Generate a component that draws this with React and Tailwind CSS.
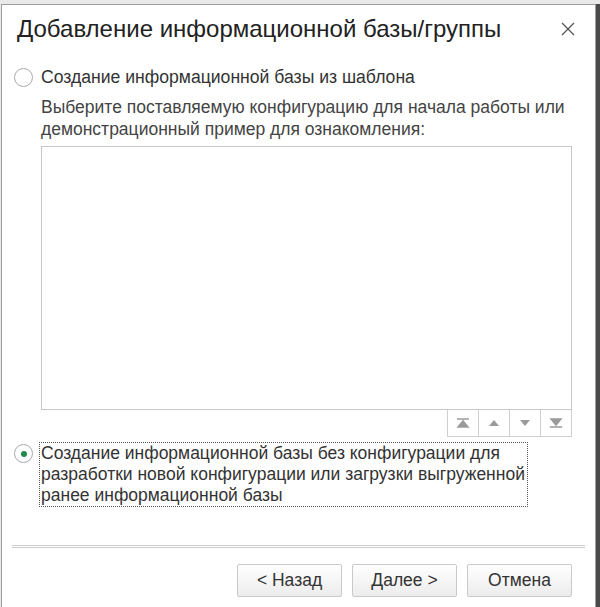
import React, { useState } from "react";

const font = { fontFamily: '"Liberation Sans", Arial, sans-serif' };

const Radio = ({ checked }) => (
  <span className="flex h-[19px] w-[19px] shrink-0 items-center justify-center rounded-full border border-[#a9a9a9] bg-white">
    {checked && <span className="h-[6px] w-[6px] rounded-full bg-[#1f8a4c]" />}
  </span>
);

const MoveButton = ({ children }) => (
  <button className="flex h-[27px] w-[31px] items-center justify-center border-r border-b border-[#cfcfcf] bg-white">
    <svg width="16" height="10" viewBox="0 0 16 10">
      {children}
    </svg>
  </button>
);

const Button = ({ children }) => (
  <button className="h-[33px] w-[105px] rounded-[2px] border border-[#c9c9c9] bg-gradient-to-b from-[#ffffff] to-[#ececec] text-[17.5px] text-[#333]">
    {children}
  </button>
);

const App = () => {
  const [mode, setMode] = useState("empty");

  return (
    <div className="flex h-[607px] w-[600px] overflow-hidden bg-[#e9e9e9]" style={font}>
      <div className="mt-[4px] ml-[1px] flex w-[595px] flex-col border-t border-l border-r border-[#9e9e9e] bg-white">
        <div className="flex h-[48px] items-center justify-between pl-[15px] pr-[20px]">
          <h1 className="text-[24px] text-[#222]">Добавление информационной базы/группы</h1>
          <svg width="14" height="14" viewBox="0 0 14 14">
            <path d="M1 1L13 13M13 1L1 13" stroke="#555" strokeWidth="1.3" />
          </svg>
        </div>

        <div className="flex flex-col pl-[12px] pr-[23px]">
          <label className="mt-[14px] flex items-center gap-[8px]" onClick={() => setMode("template")}>
            <Radio checked={mode === "template"} />
            <span className="text-[17.6px] leading-[21px] text-[#333]">Создание информационной базы из шаблона</span>
          </label>

          <div className="ml-[27px] mt-[8px] text-[17.5px] leading-[22px] text-[#444]">
            Выберите поставляемую конфигурацию для начала работы или
            <br />
            демонстрационный пример для ознакомления:
          </div>

          <div className="ml-[27px] mt-[6px] h-[264px] border border-[#c8c8c8] bg-white" />

          <div className="flex justify-end">
            <div className="flex border-l border-[#cfcfcf]">
              <MoveButton>
                <path d="M2 1H14M3 9L8 3L13 9Z" stroke="#9a9a9a" strokeWidth="1.5" fill="#9a9a9a" />
              </MoveButton>
              <MoveButton>
                <path d="M3 8L8 2L13 8Z" fill="#9a9a9a" />
              </MoveButton>
              <MoveButton>
                <path d="M3 2L8 8L13 2Z" fill="#9a9a9a" />
              </MoveButton>
              <MoveButton>
                <path d="M3 1L8 7L13 1ZM2 9H14" stroke="#9a9a9a" strokeWidth="1.5" fill="#9a9a9a" />
              </MoveButton>
            </div>
          </div>

          <label className="mt-[5px] flex items-start gap-[6px]" onClick={() => setMode("empty")}>
            <span className="mt-[2px]">
              <Radio checked={mode === "empty"} />
            </span>
            <span className="border border-dotted border-[#555] pl-[1px] pr-[2px] text-[17.5px] leading-[21px] text-[#333]">
              Создание информационной базы без конфигурации для
              <br />
              разработки новой конфигурации или загрузки выгруженной
              <br />
              ранее информационной базы
            </span>
          </label>
        </div>

        <div className="mx-[10px] mt-[38px] h-[3px] border-t border-b border-[#cccccc]" />

        <div className="mt-[16px] flex justify-end gap-[10px] pr-[23px]">
          <Button>&lt; Назад</Button>
          <Button>Далее &gt;</Button>
          <Button>Отмена</Button>
        </div>
      </div>
      <div className="mt-[4px] flex-1 bg-[#4a4a4a]" />
    </div>
  );
};

export default App;
